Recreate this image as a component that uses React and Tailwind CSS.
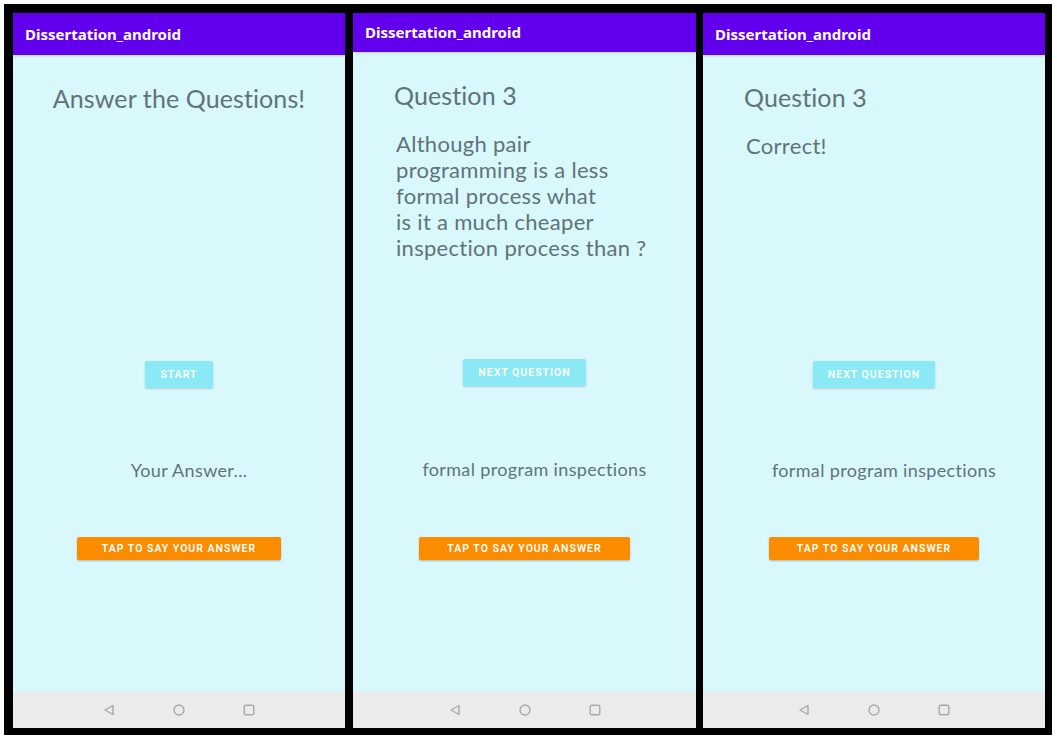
const font = { fontFamily: "Lato, 'Open Sans', sans-serif" };

function NavBar() {
  return (
    <div className="h-[36px] bg-[#ebebeb] flex items-center justify-center gap-[56px]">
      <svg width="14" height="14" viewBox="0 0 14 14" fill="none" stroke="#a9a9a9" strokeWidth="1.4" strokeLinejoin="round">
        <path d="M11 2.5 L3 7 L11 11.5 Z" />
      </svg>
      <svg width="14" height="14" viewBox="0 0 14 14" fill="none" stroke="#a9a9a9" strokeWidth="1.4">
        <circle cx="7" cy="7" r="5" />
      </svg>
      <svg width="14" height="14" viewBox="0 0 14 14" fill="none" stroke="#a9a9a9" strokeWidth="1.4">
        <rect x="2.2" y="2.2" width="9.6" height="9.6" rx="1.8" />
      </svg>
    </div>
  );
}

function Header({ h }) {
  return (
    <div
      className={`${h} bg-[#6200ee] flex items-center pl-3 text-white text-[15px] font-bold shadow-sm`}
      style={{ fontFamily: "'Noto Sans', Roboto, sans-serif" }}
    >
      Dissertation_android
    </div>
  );
}

function LightButton({ children, mt }) {
  return (
    <div className={`${mt} flex justify-center`}>
      <div
        className="h-[27px] px-[15px] rounded-[2px] bg-[#8ae9f4] shadow-[0_1px_2px_rgba(0,0,0,0.18)] flex items-center text-white text-[10.5px] font-semibold tracking-[1px]"
        style={{ fontFamily: "Roboto, 'Noto Sans', sans-serif" }}
      >
        {children}
      </div>
    </div>
  );
}

function OrangeButton({ mt, w }) {
  return (
    <div className={`${mt} flex justify-center`}>
      <div
        className={`${w} h-[23px] rounded-[2px] bg-[#fb8c00] shadow-[0_1px_2px_rgba(0,0,0,0.25)] flex items-center justify-center text-white text-[10.5px] font-semibold tracking-[1px]`}
        style={{ fontFamily: "Roboto, 'Noto Sans', sans-serif" }}
      >
        TAP TO SAY YOUR ANSWER
      </div>
    </div>
  );
}

function Answer({ children, mt }) {
  return (
    <div className={`${mt} pl-5 text-center text-[18px] leading-[24px] tracking-[0.35px] text-[#5f7379]`} style={font}>
      {children}
    </div>
  );
}

export default function App() {
  return (
    <div className="w-[1057px] h-[742px] bg-white pt-[4px] pl-[4px]">
      <div className="w-[1048px] h-[731px] bg-black pt-[9px] pl-[9px] pr-[7px] pb-[7px] flex">
        {/* screen 1 */}
        <div className="w-[332px] h-full flex flex-col bg-[#d9f8fb]">
          <Header h="h-[42px]" />
          <div className="flex-1 flex flex-col">
            <div className="mt-[27px] text-center text-[25px] leading-[32px] tracking-[0.1px] text-[#5f7379]" style={font}>
              Answer the Questions!
            </div>
            <LightButton mt="mt-[247px]">START</LightButton>
            <Answer mt="mt-[70px]">Your Answer...</Answer>
            <OrangeButton mt="mt-[55px]" w="w-[204px]" />
          </div>
          <NavBar />
        </div>

        {/* screen 2 */}
        <div className="ml-[8px] w-[343px] h-full flex flex-col bg-[#d9f8fb]">
          <Header h="h-[39px]" />
          <div className="flex-1 flex flex-col">
            <div className="mt-[27px] pl-[41px] text-[25px] leading-[32px] tracking-[0.1px] text-[#5f7379]" style={font}>
              Question 3
            </div>
            <div className="mt-[20px] pl-[43px] text-[22px] leading-[26px] tracking-[0.3px] text-[#5f7379]" style={font}>
              Although pair
              <br />
              programming is a less
              <br />
              formal process what
              <br />
              is it a much cheaper
              <br />
              inspection process than ?
            </div>
            <LightButton mt="mt-[98px]">NEXT QUESTION</LightButton>
            <Answer mt="mt-[71px]">formal program inspections</Answer>
            <OrangeButton mt="mt-[56px]" w="w-[211px]" />
          </div>
          <NavBar />
        </div>

        {/* screen 3 */}
        <div className="ml-[7px] w-[342px] h-full flex flex-col bg-[#d9f8fb]">
          <Header h="h-[42px]" />
          <div className="flex-1 flex flex-col">
            <div className="mt-[26px] pl-[41px] text-[25px] leading-[32px] tracking-[0.1px] text-[#5f7379]" style={font}>
              Question 3
            </div>
            <div className="mt-[20px] pl-[43px] text-[22px] leading-[26px] tracking-[0.3px] text-[#5f7379]" style={font}>
              Correct!
            </div>
            <LightButton mt="mt-[202px]">NEXT QUESTION</LightButton>
            <Answer mt="mt-[70px]">formal program inspections</Answer>
            <OrangeButton mt="mt-[55px]" w="w-[210px]" />
          </div>
          <NavBar />
        </div>
      </div>
    </div>
  );
}
